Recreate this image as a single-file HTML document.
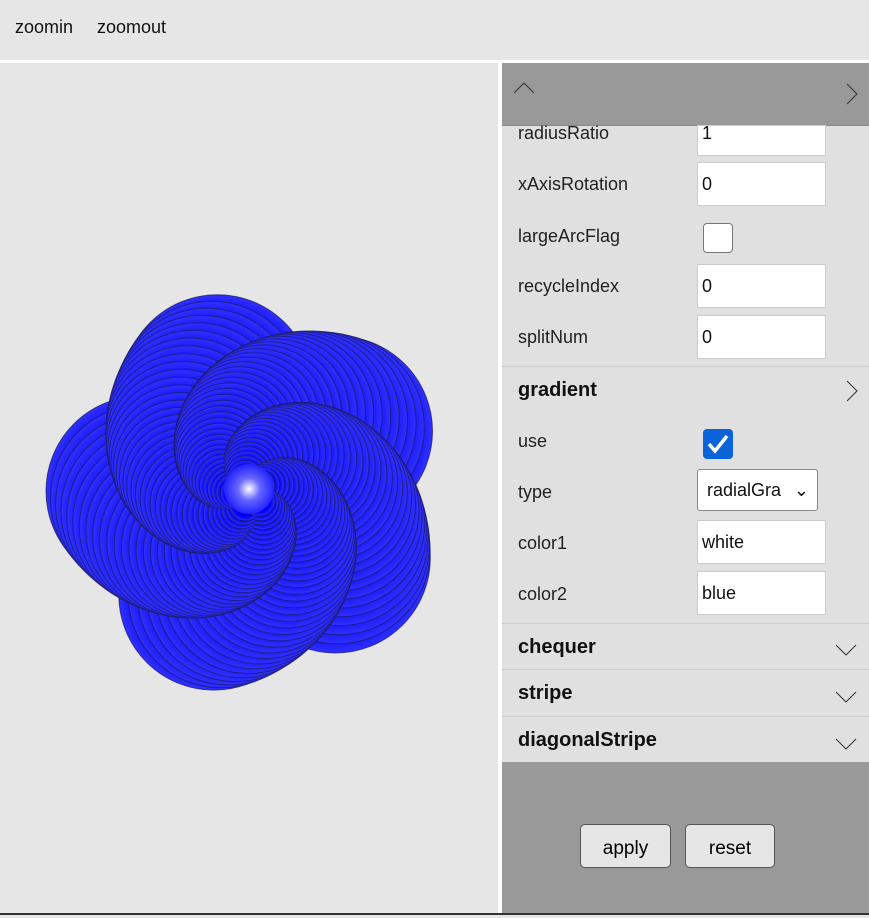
<!DOCTYPE html>
<html><head><style>
body{margin:0;width:869px;height:915px;background:#e6e6e6;font-family:"Liberation Sans",Arial,sans-serif;position:relative;overflow:hidden}
.top{position:absolute;left:0;top:0;width:869px;height:60px;background:#e6e6e6;border-bottom:3px solid #fff}
.top span{position:absolute;top:17px;font-size:18px;color:#111}
.left{position:absolute;left:0;top:63px;width:498px;height:850px;background:#e6e6e6;border-right:4px solid #fff}
.panel{position:absolute;left:502px;top:63px;width:367px;height:850px;background:#e0e0e0}
.hdr{position:absolute;left:0;top:0;width:367px;height:62px;background:#999;border-bottom:1px solid #888}
.lbl{position:absolute;left:16px;font-size:18px;color:#222}
.inp{position:absolute;left:195px;width:129px;height:44px;background:#fff;border:1px solid #ccc;box-sizing:border-box;font-size:18px;padding:0 4px;line-height:42px;color:#111}
.sec{position:absolute;left:16px;font-size:20px;font-weight:bold;color:#111}
.line{position:absolute;left:0;width:367px;height:1px;background:#ccc}
.btm{position:absolute;left:0;top:699px;width:367px;height:151px;background:#999}
.btn{position:absolute;top:62px;height:44px;border:1px solid #555;border-radius:5px;background:#e6e6e6;font-size:19px;text-align:center;line-height:48px;box-sizing:border-box}
svg.i{position:absolute}
</style></head><body>
<div class="top"><span style="left:15px">zoomin</span><span style="left:97px">zoomout</span></div>
<div class="left"><svg id="f" width="498" height="850"></svg></div>
<div style="position:absolute;left:0;top:913px;width:869px;height:2px;background:#333"></div>
<div class="panel">
<div class="hdr">
<svg class="i" style="left:11px;top:18px" width="24" height="14"><path d="M1 12 L11 2 L21 12" fill="none" stroke="#333" stroke-width="1"/></svg>
<svg class="i" style="left:343px;top:19px" width="14" height="24"><path d="M2 2 L12 12 L2 22" fill="none" stroke="#333" stroke-width="1"/></svg>
</div>
<div class="inp" style="top:62px;height:31px;line-height:14px">1</div>
<div class="lbl" style="top:60px">radiusRatio</div>
<div class="lbl" style="top:111px">xAxisRotation</div><div class="inp" style="top:99px">0</div>
<div class="lbl" style="top:163px">largeArcFlag</div>
<div style="position:absolute;left:201px;top:160px;width:30px;height:30px;background:#fff;border:1px solid #777;border-radius:4px;box-sizing:border-box"></div>
<div class="lbl" style="top:213px">recycleIndex</div><div class="inp" style="top:201px">0</div>
<div class="lbl" style="top:264px">splitNum</div><div class="inp" style="top:252px">0</div>
<div class="line" style="top:303px"></div>
<div class="sec" style="top:316px">gradient</div>
<svg class="i" style="left:343px;top:316px" width="14" height="24"><path d="M2 2 L12 12 L2 22" fill="none" stroke="#333" stroke-width="1"/></svg>
<div class="lbl" style="top:368px">use</div>
<div style="position:absolute;left:201px;top:366px;width:30px;height:30px;background:#0a63d8;border-radius:4px"><svg width="30" height="30"><path d="M6 15 L12 22 L24 7" fill="none" stroke="#fff" stroke-width="3.5"/></svg></div>
<div class="lbl" style="top:419px">type</div>
<div class="inp" style="top:406px;width:121px;height:42px;border-color:#888;border-radius:3px;line-height:40px;padding-left:9px">radialGra<span style="position:absolute;right:8px;top:0">⌄</span></div>
<div class="lbl" style="top:470px">color1</div><div class="inp" style="top:457px">white</div>
<div class="lbl" style="top:521px">color2</div><div class="inp" style="top:508px">blue</div>
<div class="line" style="top:560px"></div>
<div class="sec" style="top:573px">chequer</div>
<div class="line" style="top:606px"></div>
<div class="sec" style="top:619px">stripe</div>
<div class="line" style="top:653px"></div>
<div class="sec" style="top:666px">diagonalStripe</div>
<svg class="i" style="left:333px;top:580px" width="24" height="14"><path d="M1 2 L11 12 L21 2" fill="none" stroke="#333" stroke-width="1"/></svg>
<svg class="i" style="left:333px;top:627px" width="24" height="14"><path d="M1 2 L11 12 L21 2" fill="none" stroke="#333" stroke-width="1"/></svg>
<svg class="i" style="left:333px;top:674px" width="24" height="14"><path d="M1 2 L11 12 L21 2" fill="none" stroke="#333" stroke-width="1"/></svg>
<div class="btm">
<div class="btn" style="left:78px;width:91px">apply</div>
<div class="btn" style="left:183px;width:90px">reset</div>
</div>
</div>
<script>
var s=document.getElementById('f'),h='<defs><radialGradient id="g"><stop offset="0" stop-color="#fff"/><stop offset="0.45" stop-color="#66f"/><stop offset="1" stop-color="#22f"/></radialGradient><radialGradient id="g2" cx="0.5" cy="0.5"><stop offset="0" stop-color="#00f"/><stop offset="0.75" stop-color="#0000f4"/><stop offset="1" stop-color="#3030ff"/></radialGradient></defs>';
var cx=249,cy=430,N=40,out='',bases=[-107,-35,37,109,181];
for(var i=N;i>=1;i--){var t=i/N;for(var k=0;k<5;k++){var a=bases[k]*Math.PI/180-(1-t)*2.6;var d=10+t*98;var r=14+t*81;
out+='<circle cx="'+(cx+d*Math.cos(a)).toFixed(1)+'" cy="'+(cy+d*Math.sin(a)).toFixed(1)+'" r="'+r.toFixed(1)+'" fill="url(#g2)" stroke="#1a1a60" stroke-opacity="0.7" stroke-width="1"/>';}}
out+='<circle cx="249" cy="426" r="25" fill="url(#g)"/>';
s.innerHTML=h+out;
</script>
</body></html>
